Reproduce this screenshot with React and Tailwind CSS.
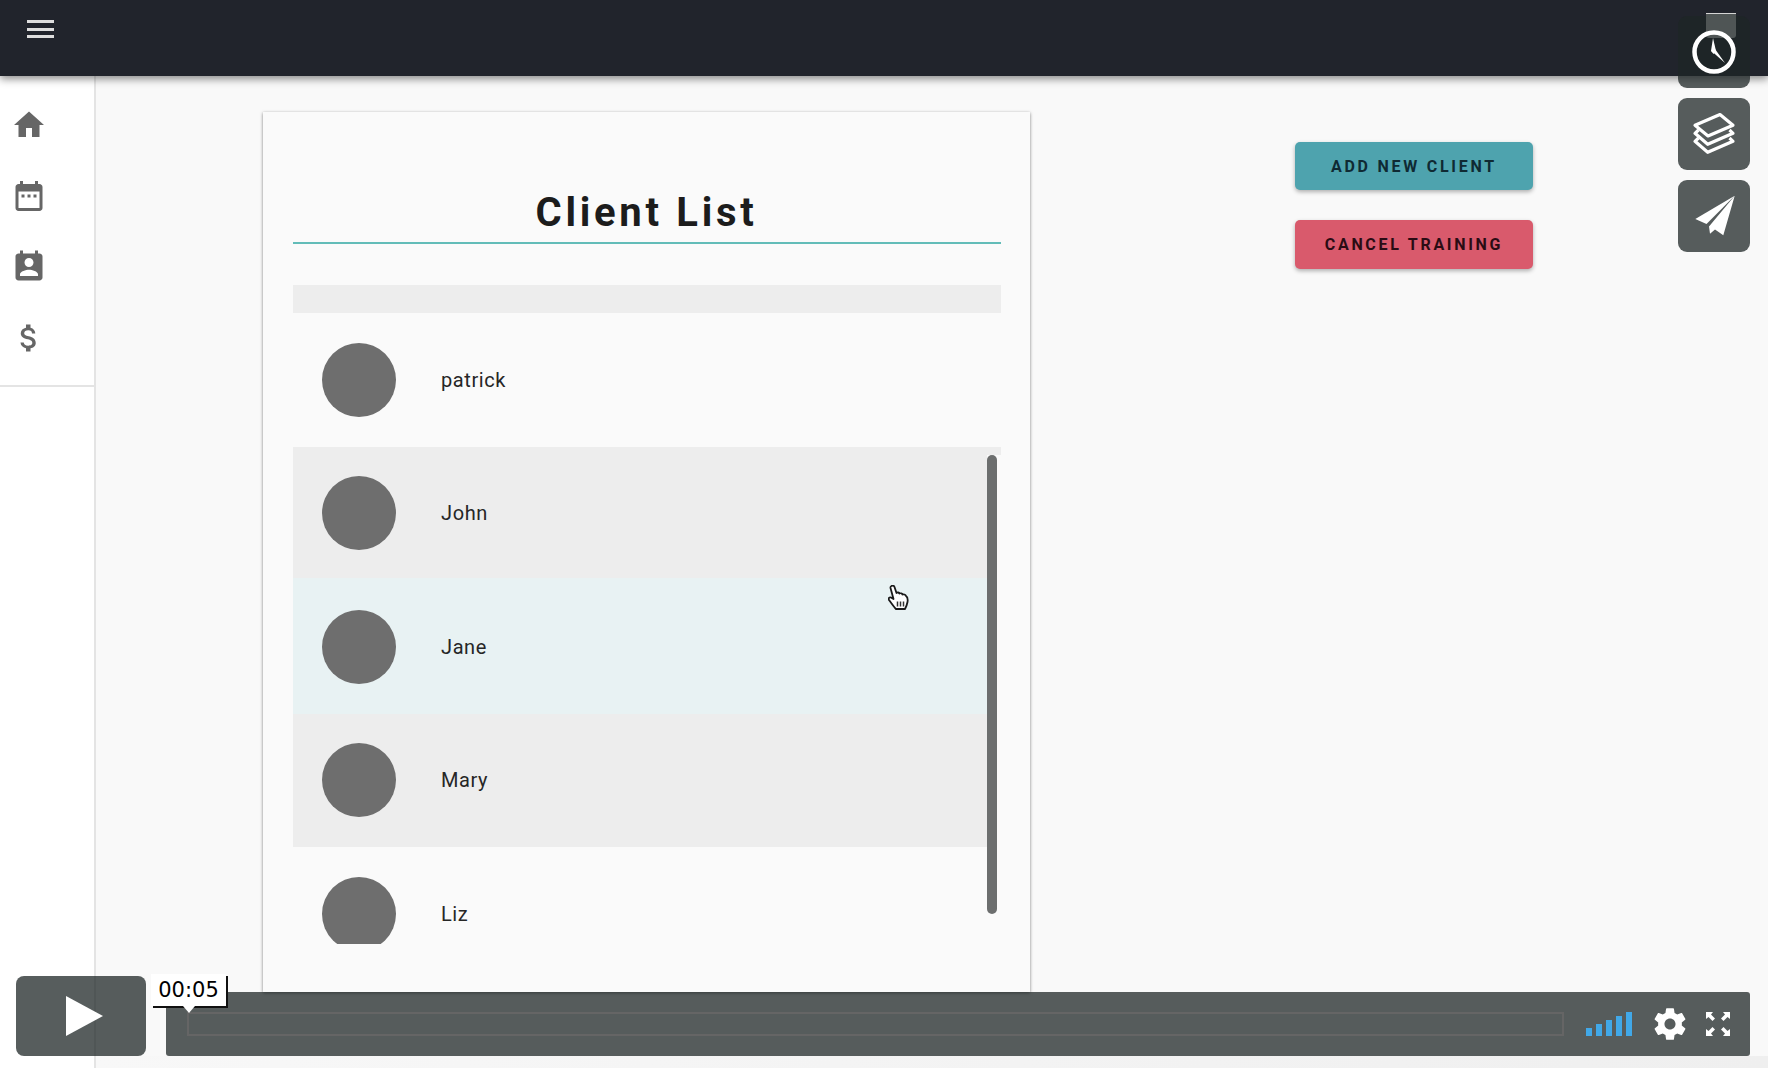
import { Fragment } from 'react';

const clients = [
  { name: 'patrick', row: 'h-[133.600px] bg-[#fafafa]' },
  { name: 'John', row: 'h-[133.600px] bg-[#ededed]' },
  { name: 'Jane', row: '-mt-[2px] h-[135.600px] pt-[2px] bg-[#e8f2f3]' },
  { name: 'Mary', row: 'h-[133.400px] bg-[#ededed]' },
  { name: 'Liz', row: 'h-[133.600px] bg-[#fafafa]' },
];

const navIcons = [
  'M10 20v-6h4v6h5v-8h3L12 3 2 12h3v8z',
  'M9 11H7v2h2v-2zm4 0h-2v2h2v-2zm4 0h-2v2h2v-2zm2-7h-1V2h-2v2H8V2H6v2H5c-1.11 0-1.99.9-1.99 2L3 20c0 1.1.89 2 2 2h14c1.1 0 2-.9 2-2V6c0-1.1-.9-2-2-2zm0 16H5V9h14v11z',
  'M19 3h-1V1h-2v2H8V1H6v2H5c-1.11 0-2 .9-2 2v14c0 1.1.89 2 2 2h14c1.1 0 2-.9 2-2V5c0-1.1-.9-2-2-2zm-7 3c1.66 0 3 1.34 3 3s-1.34 3-3 3-3-1.34-3-3 1.34-3 3-3zm6 12H6v-1c0-2 4-3.1 6-3.1s6 1.1 6 3.1v1z',
  'M11.8 10.9c-2.27-.59-3-1.2-3-2.15 0-1.09 1.01-1.85 2.7-1.85 1.78 0 2.44.85 2.5 2.1h2.21c-.07-1.72-1.12-3.3-3.21-3.81V3h-3v2.16c-1.94.42-3.5 1.68-3.5 3.61 0 2.31 1.91 3.46 4.7 4.13 2.5.6 3 1.48 3 2.41 0 .69-.49 1.79-2.7 1.79-2.06 0-2.87-.92-2.98-2.1h-2.2c.12 2.19 1.76 3.42 3.68 3.83V21h3v-2.15c1.95-.37 3.5-1.5 3.5-3.55 0-2.84-2.43-3.81-4.7-4.4z',
];

const gearPath =
  'M19.43 12.98c.04-.32.07-.64.07-.98s-.03-.66-.07-.98l2.11-1.65c.19-.15.24-.42.12-.64l-2-3.46c-.12-.22-.39-.3-.61-.22l-2.49 1c-.52-.4-1.08-.73-1.69-.98l-.38-2.65C14.46 2.18 14.25 2 14 2h-4c-.25 0-.46.18-.49.42l-.38 2.65c-.61.25-1.17.59-1.69.98l-2.49-1c-.23-.09-.49 0-.61.22l-2 3.46c-.13.22-.07.49.12.64l2.11 1.65c-.04.32-.07.65-.07.98s.03.66.07.98l-2.11 1.65c-.19.15-.24.42-.12.64l2 3.46c.12.22.39.3.61.22l2.49-1c.52.4 1.08.73 1.69.98l.38 2.65c.03.24.24.42.49.42h4c.25 0 .46-.18.49-.42l.38-2.65c.61-.25 1.17-.59 1.69-.98l2.49 1c.23.09.49 0 .61-.22l2-3.46c.12-.22.07-.49-.12-.64l-2.11-1.65zM12 15.5c-1.93 0-3.5-1.57-3.5-3.5s1.57-3.5 3.5-3.5 3.5 1.57 3.5 3.5-1.57 3.5-3.5 3.5z';

const ClockIcon = () => (
  <svg viewBox="0 0 72 72" className="relative h-[72px] w-[72px]">
    <circle cx="36" cy="36" r="19.500" fill="none" stroke="#fff" strokeWidth="4.500" />
    <path d="M35 22l3 13-2.500 3-2.500-3z" fill="#fff" />
    <path d="M33.500 35l3.500-2 10 14z" fill="#fff" />
  </svg>
);

const LayersIcon = () => (
  <svg viewBox="0 0 72 72" className="h-[72px] w-[72px]" fill="none" stroke="#fff" strokeWidth="3.200" strokeLinejoin="round">
    <path d="M17 27.300L42 16.500l13 10.800-25 10.700z" />
    <path d="M20.500 32L17 35.300l12.700 11 25.300-11L51.500 32" />
    <path d="M20.500 40L17 43.300l12.700 11 25.300-11L51.500 40" />
  </svg>
);

const PlaneIcon = () => (
  <svg viewBox="0 0 72 72" className="h-[72px] w-[72px]" fill="#fff">
    <path d="M56.700 15.700L17.300 39l11.200 5z" />
    <path d="M56.700 15.700L31 46.500l1 7.300 5-4.300 8.300 5.700z" />
  </svg>
);

const FullscreenIcon = () => (
  <svg viewBox="0 0 24 24" className="h-6 w-6" fill="#fff">
    <path d="M0 0h7L5 2.500l4 4L6.500 9l-4-4L0 7z" />
    <path d="M24 0h-7l2 2.500-4 4L17.500 9l4-4L24 7z" />
    <path d="M0 24h7l-2-2.500 4-4L6.500 15l-4 4L0 17z" />
    <path d="M24 24h-7l2-2.500-4-4 2.500-2.500 4 4 2.500-2z" />
  </svg>
);

const HandCursor = () => (
  <svg viewBox="0 0 21 25" className="absolute left-[888px] top-[585px] h-[25px] w-[21px]">
    <path
      d="M3.500 1C4.500 0 6 .5 6.500 2l2 6c1-1 2.500-.5 3 .5 1-.5 2.500 0 3 1 1-.5 3 0 3.500 1.500 1.500 1 2 3 1.500 6-.5 3-1.500 5-2.500 7H8c-2-2-4-5-7-9-1-2 .5-3 2-2.500L5.500 14l-3-11c-.2-1 .3-1.700 1-2z"
      fill="#fff"
      stroke="#1a1a1a"
      strokeWidth="1.800"
      strokeLinejoin="round"
    />
    <path d="M9.500 16.500v5M12.500 16.500v5M15.500 16.500v5" stroke="#333" strokeWidth="1.500" />
  </svg>
);

const App = () => {
  return (
    <div className="relative h-screen overflow-hidden bg-[#f9f9f9] font-['Roboto',sans-serif]">
      <header className="relative z-10 h-[76px] bg-[#21242c] pl-[27px] pt-[20px] shadow-[0_3px_8px_rgba(0,0,0,0.45)]">
        <div className="flex w-[27px] flex-col gap-[4.500px]">
          <span className="h-[3px] bg-[#dedede]" />
          <span className="h-[3px] bg-[#dedede]" />
          <span className="h-[3px] bg-[#dedede]" />
        </div>
      </header>

      <div className="flex h-[992px]">
        <aside className="h-full w-[96px] shrink-0 border-r-2 border-[#e4e4e4] bg-white">
          <nav className="flex h-[311px] flex-col gap-[35px] border-b-2 border-[#e4e4e4] pl-[10.500px] pt-[31px]">
            {navIcons.map((d) => (
              <svg key={d} viewBox="0 0 24 24" className="h-9 w-9" fill="#666666">
                <path d={d} />
              </svg>
            ))}
          </nav>
        </aside>

        <main className="flex flex-1 items-start">
          <section className="ml-[167px] mt-[36px] h-[880px] w-[767px] shrink-0 bg-[#fafafa] px-[29.500px] shadow-[0_1px_3px_rgba(0,0,0,0.5)]">
            <h1 className="border-b-2 border-[#62bcb8] pb-[5px] pt-[77px] text-center text-[40px] font-bold leading-[48px] tracking-[3.700px] text-[#1c1c1c]">
              Client List
            </h1>
            <div className="mt-[41px] h-[28px] bg-[#ededed]" />
            <div className="relative h-[631px] overflow-hidden">
              {clients.map((client) => (
                <div key={client.name} className={`flex items-center pl-[29.500px] ${client.row}`}>
                  <div className="h-[74px] w-[74px] rounded-full bg-[#6e6e6e]" />
                  <span className="ml-[45px] text-[20px] tracking-[0.600px] text-[#262626]">{client.name}</span>
                </div>
              ))}
              <div className="absolute bottom-0 right-0 top-[142px] w-[14px] bg-[#fafafa]">
                <div className="h-[459px] w-[10px] rounded-full bg-[#6c6e6e]" />
              </div>
            </div>
          </section>

          <div className="ml-[265px] mt-[66px] flex w-[238px] flex-col gap-[30px]">
            <button className="h-[48px] rounded-[5px] bg-[#4ea3ae] pt-[2px] text-[16px] font-bold tracking-[2.750px] text-[#0f2a33] shadow-[0_2px_4px_rgba(0,0,0,0.3)]">
              ADD NEW CLIENT
            </button>
            <button className="h-[49px] rounded-[5px] bg-[#d95a6c] pt-[1px] text-[16px] font-bold tracking-[2.700px] text-[#2a0c14] shadow-[0_2px_4px_rgba(0,0,0,0.3)]">
              CANCEL TRAINING
            </button>
          </div>
        </main>
      </div>

      <div className="absolute bottom-0 left-[96px] right-0 h-[12px] bg-gradient-to-r from-[#f8f8f8] to-[#efefef]" />

      <HandCursor />

      {/* video player chrome sits on top of the page */}
      <div className="absolute left-[1678px] top-[16px] z-20 flex flex-col gap-[10px]">
        {[<ClockIcon key="c" />, <LayersIcon key="l" />, <PlaneIcon key="p" />].map((icon, i) => (
          <Fragment key={i}>
            <div className="relative h-[72px] w-[72px] rounded-[9px] bg-[rgba(29,37,37,0.745)]">
              {i === 0 && <div className="absolute left-[28px] top-[-3px] h-[25px] w-[30px] rounded-b-[3px] border-t border-[#d5d5d5] bg-[#4f5555]" />}
              {icon}
            </div>
          </Fragment>
        ))}
      </div>

      <div className="absolute left-[16px] top-[976px] z-20 flex h-[80px] w-[130px] items-center justify-center rounded-[8px] bg-[rgba(29,37,37,0.745)]">
        <svg viewBox="0 0 37 40" className="ml-[6px] h-[40px] w-[37px]" fill="#fff">
          <path d="M0 0l37 20L0 40z" />
        </svg>
      </div>

      <div className="absolute left-[166px] top-[992px] z-20 flex h-[64px] w-[1584px] items-center rounded-[3px] bg-[rgba(29,37,37,0.745)] pl-[21px]">
        <div className="h-[24px] w-[1377px] border-2 border-[#656565]" />
        <div className="ml-[22px] flex h-[24px] items-end gap-[4px]">
          <span className="h-[8px] w-[6px] bg-[#41a8e8]" />
          <span className="h-[12px] w-[6px] bg-[#41a8e8]" />
          <span className="h-[16px] w-[6px] bg-[#41a8e8]" />
          <span className="h-[20px] w-[6px] bg-[#41a8e8]" />
          <span className="h-[24px] w-[6px] bg-[#41a8e8]" />
        </div>
        <svg viewBox="0 0 24 24" className="ml-[19px] h-[38px] w-[38px]" fill="#fff">
          <path fillRule="evenodd" d={gearPath} />
        </svg>
        <div className="ml-[17px]">
          <FullscreenIcon />
        </div>
      </div>

      <div className="absolute left-[151px] top-[974px] z-30 flex h-[32px] w-[75px] items-center justify-center bg-white font-['DejaVu_Sans',sans-serif] text-[21px] leading-none text-black shadow-[2px_2px_0_#111]">
        00:05
        <span className="absolute left-[32px] top-[32px] h-0 w-0 border-x-[6px] border-t-[7px] border-x-transparent border-t-white" />
      </div>
    </div>
  );
};

export default App;
